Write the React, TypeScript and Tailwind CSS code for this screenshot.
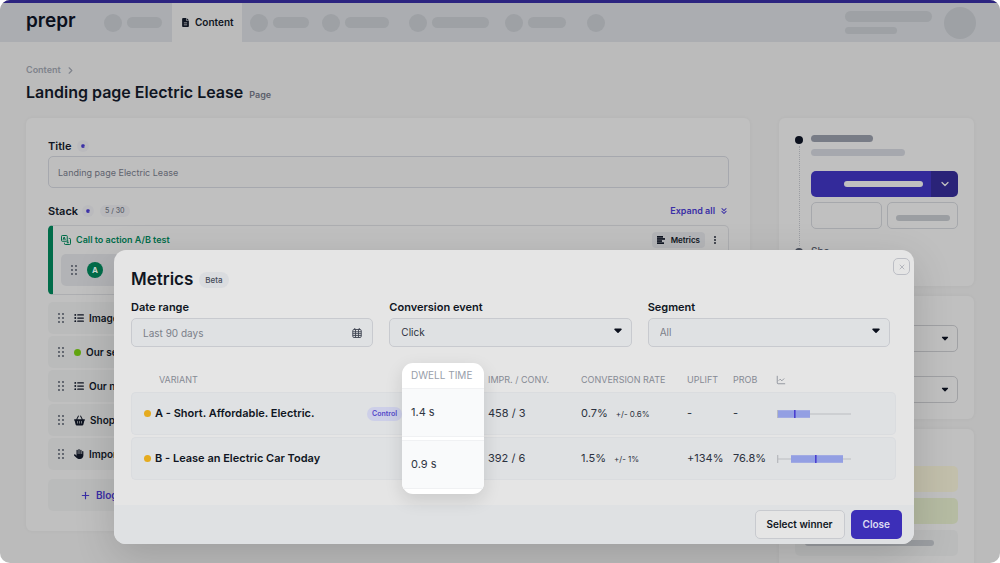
import type { ReactNode } from 'react'
import { ChartLine, ChevronDown, ChevronRight, ChevronsDown, Plus, X } from 'lucide-react'
import { FaBasketShopping, FaCaretDown, FaFileLines, FaHand, FaListUl } from 'react-icons/fa6'

const variants = [
  {
    name: 'A - Short. Affordable. Electric.',
    control: true,
    dwell: '1.4 s',
    impressions: '458 / 3',
    rate: '0.7%',
    margin: '+/- 0.6%',
    uplift: '-',
    prob: '-',
    box: { start: 1, end: 33, median: 18 },
  },
  {
    name: 'B - Lease an Electric Car Today',
    control: false,
    dwell: '0.9 s',
    impressions: '392 / 6',
    rate: '1.5%',
    margin: '+/- 1%',
    uplift: '+134%',
    prob: '76.8%',
    box: { start: 14, end: 66, median: 39 },
  },
]

const stackItems = [
  { label: 'Image', icon: <FaListUl className="size-2.5" /> },
  { label: 'Our se', icon: <span className="size-[7px] rounded-full bg-[#62a510]" /> },
  { label: 'Our n', icon: <FaListUl className="size-2.5" /> },
  { label: 'Shop', icon: <FaBasketShopping className="size-[11px]" /> },
  { label: 'Impor', icon: <FaHand className="size-2.5" /> },
]

function Grip() {
  return (
    <svg viewBox="0 0 6 10" className="h-2.5 w-1.5 shrink-0" fill="#3c424e">
      {[1, 5].map((x) => [1, 5, 9].map((y) => <circle key={`${x}-${y}`} cx={x} cy={y} r="0.9" />))}
    </svg>
  )
}

function AbIcon() {
  return (
    <svg viewBox="0 0 20 20" className="size-2.5 shrink-0" fill="none" stroke="#006c49" strokeWidth="2">
      <rect x="1" y="1" width="11.5" height="11.5" rx="1.5" />
      <path d="M7 15.5V17.5a1.5 1.5 0 0 0 1.5 1.5h9a1.5 1.5 0 0 0 1.5-1.5v-9A1.5 1.5 0 0 0 17.5 7h-2" />
      <path d="M4 9.5 6.3 4l2.4 5.5M4.8 8h3M11.5 15.5h4M13.5 10.5v5" />
    </svg>
  )
}

function BarsIcon() {
  return (
    <svg viewBox="0 0 8 8" className="size-2" fill="#0f1522">
      <rect width="6" height="1.7" />
      <rect y="2.1" width="8" height="1.7" />
      <rect y="4.2" width="5" height="1.7" />
      <rect y="6.3" width="7" height="1.7" />
    </svg>
  )
}

function CalendarIcon() {
  return (
    <svg viewBox="0 0 20 20" className="size-2.5 shrink-0" fill="none" stroke="#3f4552" strokeWidth="1.8">
      <rect x="1.5" y="3" width="17" height="16" rx="2.5" />
      <path d="M1.5 7.5h17M1.5 11.3h17M1.5 15.1h17M7 3V19M13 3V19M5.5 0v4M14.5 0v4" />
    </svg>
  )
}

function DotsIcon() {
  return (
    <svg viewBox="0 0 2 8" className="h-2 w-0.5" fill="#0f1522">
      <circle cx="1" cy="1" r="0.9" />
      <circle cx="1" cy="4" r="0.9" />
      <circle cx="1" cy="7" r="0.9" />
    </svg>
  )
}

function Required() {
  return (
    <span className="flex size-3 items-center justify-center rounded-full bg-[#bababd]">
      <svg viewBox="0 0 6 6" className="size-1" stroke="#3a2fa6" strokeWidth="2">
        <path d="M3 0v6M0.4 1.5l5.2 3M5.6 1.5l-5.2 3" />
      </svg>
    </span>
  )
}

function NavItem({ bar }: { bar?: string }) {
  return (
    <div className="flex items-center gap-[5px]">
      <span className="size-[18px] rounded-full bg-[#9ea1a5]" />
      {bar && <span className={`h-[11px] rounded-full bg-[#9ea1a5] ${bar}`} />}
    </div>
  )
}

function Header() {
  return (
    <header className="flex h-[42px] shrink-0 items-stretch border-t-[3px] border-[#2c2480] bg-[#abadb1]">
      <a href="#" className="w-[78px] pl-[26px] text-[19px] leading-9 font-semibold text-[#0b101d]">
        prepr
      </a>
      <nav className="flex flex-1 items-stretch pl-[26px]">
        <div className="flex w-[68px] items-center">
          <NavItem bar="w-[35px]" />
        </div>
        <a href="#" className="flex w-[70px] items-center gap-[5px] bg-[#bbbbbb] pl-[9px] text-[10px] font-semibold text-[#0f1522]">
          <FaFileLines className="size-[9px]" />
          Content
        </a>
        <div className="flex items-center pl-2">
          <div className="w-[72px]"><NavItem bar="w-[36px]" /></div>
          <div className="w-[87px]"><NavItem bar="w-[44px]" /></div>
          <div className="w-24"><NavItem bar="w-[57px]" /></div>
          <div className="w-[82px]"><NavItem bar="w-[38px]" /></div>
          <NavItem />
        </div>
      </nav>
      <div className="flex items-center gap-3 pr-6">
        <div className="flex flex-col gap-[5px]">
          <span className="h-[11px] w-[87px] rounded-full bg-[#9ea1a5]" />
          <span className="h-[7px] w-[52px] rounded-full bg-[#9ea1a5]" />
        </div>
        <span className="size-8 rounded-full bg-[#9ea1a5]" />
      </div>
    </header>
  )
}

function Editor() {
  return (
    <section className="min-w-0 flex-1 rounded-md bg-[#c0c0c0] pt-5 pr-[21px] pb-5 pl-[22px] shadow-[0_0_4px_rgba(0,0,0,0.04)]">
      <div className="flex h-4 items-center gap-1.5">
        <label htmlFor="title" className="text-[11px] font-semibold">Title</label>
        <Required />
      </div>
      <input
        id="title"
        defaultValue="Landing page Electric Lease"
        className="mt-0.5 block h-8 w-full rounded-[5px] border border-[#a6a8ae] bg-[#bebebe] px-[9px] text-[9px] text-[#5f636e]"
      />

      <div className="mt-[15px] flex h-4 items-center">
        <h2 className="text-[11px] font-semibold">Stack</h2>
        <div className="ml-1"><Required /></div>
        <span className="ml-1.5 rounded-full bg-[#b9b9bc] px-[5px] text-[7px] leading-3 font-medium text-[#5b606b]">5 / 30</span>
        <button className="ml-auto flex items-center gap-1 text-[9px] font-semibold text-[#3a2fa6]">
          Expand all
          <ChevronsDown className="size-2.5" strokeWidth={2.5} />
        </button>
      </div>

      <div className="mt-1.5 h-[70px] rounded-[5px] border border-l-[5px] border-[#adaeb1] border-l-[#006c49] pt-1.5 pr-2 pl-2">
        <div className="flex h-4 items-center gap-[5px] text-[9px] font-semibold text-[#006c49]">
          <AbIcon />
          Call to action A/B test
          <button className="ml-auto flex h-4 items-center gap-1.5 rounded-sm bg-[#b4b5b8] px-[5px] text-[8px] font-semibold text-[#0f1522]">
            <BarsIcon />
            Metrics
          </button>
          <button aria-label="More" className="px-1"><DotsIcon /></button>
        </div>
        <div className="mt-1.5 flex h-8 items-center gap-2.5 rounded-[5px] bg-[#b2b3b6] pl-2.5">
          <Grip />
          <span className="flex size-4 items-center justify-center rounded-full bg-[#006c49] text-[8px] font-bold text-[#c9d6d1]">A</span>
        </div>
      </div>

      <ul className="mt-[7px] flex flex-col gap-0.5">
        {stackItems.map((item) => (
          <li key={item.label} className="flex h-8 items-center gap-2.5 rounded-[5px] bg-[#babbbb] pl-2.5 text-[10px] font-semibold">
            <Grip />
            <span className="flex items-center gap-[5px]">
              {item.icon}
              {item.label}
            </span>
          </li>
        ))}
      </ul>
      <button className="mt-[9px] flex h-8 w-full items-center gap-[5px] rounded-[5px] bg-[#babbbb] pl-8 text-[10px] font-semibold text-[#3a2fa6]">
        <Plus className="size-[11px]" strokeWidth={2.5} />
        Blog
      </button>
    </section>
  )
}

function SideSelect({ label }: { label: string }) {
  return (
    <div className="relative">
      <select aria-label={label} className="block h-[27px] w-full appearance-none rounded-[5px] border border-[#a0a1a4] bg-transparent" />
      <FaCaretDown className="pointer-events-none absolute top-2 right-2 size-2.5 text-[#0b101d]" />
    </div>
  )
}

function Sidebar() {
  return (
    <aside className="flex w-[195px] shrink-0 flex-col gap-2.5">
      <div className="flex h-[168px] gap-2 overflow-hidden rounded-md bg-[#c0c0c0] pt-[17px] pr-4 pl-4 shadow-[0_0_4px_rgba(0,0,0,0.04)]">
        <div className="flex w-2 flex-col items-center">
          <span className="mt-px size-2 shrink-0 rounded-full bg-[#0b101d]" />
          <span className="my-0.5 h-[100px] border-l border-dotted border-[#9b9da2]" />
          <span className="size-2 shrink-0 rounded-full bg-[#4a4f5b]" />
        </div>
        <div className="flex-1">
          <div className="h-[7px] w-[62px] rounded-full bg-[#787c86]" />
          <div className="mt-[7px] h-[7px] w-[94px] rounded-full bg-[#a6a8ae]" />
          <div className="mt-[15px] flex h-[26px] overflow-hidden rounded-[5px]">
            <button aria-label="Publish" className="flex flex-1 items-center justify-end bg-[#332a9a] pr-2">
              <span className="h-1.5 w-[79px] rounded-full bg-[#c0c0c0]" />
            </button>
            <button aria-label="Publish options" className="flex w-[27px] items-center justify-center bg-[#2a2378] text-[#c0c0c0]">
              <ChevronDown className="size-3" strokeWidth={2.5} />
            </button>
          </div>
          <div className="mt-[5px] grid grid-cols-2 gap-[5px]">
            <button aria-label="Preview" className="h-[27px] rounded-[5px] border border-[#a6a8ac]" />
            <button aria-label="Save" className="flex h-[27px] items-center justify-center rounded-[5px] border border-[#a6a8ac] pt-1">
              <span className="h-1.5 w-[54px] rounded-full bg-[#9b9ea2]" />
            </button>
          </div>
          <p className="mt-[15px] text-[10px] font-medium text-[#4a4f5b]">Sho</p>
        </div>
      </div>
      <div className="flex h-[123px] flex-col gap-6 rounded-md bg-[#c0c0c0] px-4 pt-[29px] shadow-[0_0_4px_rgba(0,0,0,0.04)]">
        <SideSelect label="Status" />
        <SideSelect label="Locale" />
      </div>
      <div className="flex h-44 flex-col gap-1.5 rounded-md bg-[#c0c0c0] px-4 pt-[37px] shadow-[0_0_4px_rgba(0,0,0,0.04)]">
        <div className="h-[26px] rounded-[5px] bg-[#c2bfab]" />
        <div className="h-[26px] rounded-[5px] bg-[#b5bba2]" />
        <div className="flex h-[26px] items-center rounded-[5px] bg-[#babbbb] pl-2.5">
          <span className="h-1.5 w-[129px] rounded-full bg-[#9b9ea2]" />
        </div>
      </div>
    </aside>
  )
}

function Field({ id, label, children }: { id: string; label: string; children: ReactNode }) {
  return (
    <div>
      <label htmlFor={id} className="block text-[11px] leading-4 font-semibold">{label}</label>
      <div className="relative mt-[3px]">{children}</div>
    </div>
  )
}

function BoxPlot({ start, end, median }: { start: number; end: number; median: number }) {
  return (
    <svg viewBox="0 0 74 8" className="h-2 w-[74px]">
      <rect y="3.5" width="74" height="1" fill="#bcbec1" />
      <rect width="1.3" height="8" fill="#b9bbbf" />
      <rect x={start} y="0.2" width={end - start} height="7.6" fill="#939fe3" />
      <rect x={median - 1} y="0" width="1.6" height="8" fill="#4a3fd0" />
    </svg>
  )
}

function DwellHighlight() {
  return (
    <div className="absolute inset-x-0 -top-1.5 h-[131px] overflow-hidden rounded-[11px] bg-white font-normal text-[#2f3542] shadow-[0_6px_18px_rgba(0,0,0,0.12)]">
      <div className="flex h-[25px] items-center pl-[9px] text-[10px] text-[#989eaa]">DWELL TIME</div>
      <div className="flex flex-col gap-[3px]">
        {variants.map((variant) => (
          <div key={variant.name} className="flex h-[49px] items-center border-y border-[#f0f1f3] bg-[#f9fafb] pl-[9px] text-[11px]">
            {variant.dwell}
          </div>
        ))}
      </div>
    </div>
  )
}

function VariantTable() {
  return (
    <table className="w-full table-fixed border-separate border-spacing-x-0 border-spacing-y-0.5 text-left text-[11px] text-[#2c3240]">
      <thead>
        <tr className="h-[21px] text-[9px] text-[#868a94]">
          <th className="pl-7 font-normal">VARIANT</th>
          <th className="relative w-[82px] p-0">
            <DwellHighlight />
          </th>
          <th className="w-[93px] pl-1 font-normal">IMPR. / CONV.</th>
          <th className="w-[106px] pl-1 font-normal">CONVERSION RATE</th>
          <th className="w-[46px] pl-1 font-normal">UPLIFT</th>
          <th className="w-[43px] pl-1 font-normal">PROB</th>
          <th className="w-[124px] pl-1 font-normal" aria-label="Chart">
            <ChartLine className="size-2.5" />
          </th>
        </tr>
      </thead>
      <tbody>
        {variants.map((variant) => (
          <tr key={variant.name} className="h-[43px] bg-[#dfe1e3]">
            <td className="rounded-l-[5px] border border-r-0 border-[#dadcdf] pl-3">
              <div className="flex items-center gap-1">
                <span className="size-[7px] rounded-full bg-[#e5ab1f]" />
                <span className="font-semibold text-[#0f1522]">{variant.name}</span>
                {variant.control && (
                  <span className="ml-auto rounded-full bg-[#cdcfe8] px-[5px] text-[7px] leading-[14px] font-semibold text-[#5347c9]">Control</span>
                )}
              </div>
            </td>
            <td className="border-y border-[#dadcdf]" />
            <td className="border-y border-[#dadcdf] pl-1">{variant.impressions}</td>
            <td className="border-y border-[#dadcdf] pl-1">
              {variant.rate}
              <span className="ml-2 text-[8px]">{variant.margin}</span>
            </td>
            <td className="border-y border-[#dadcdf] pl-1">{variant.uplift}</td>
            <td className="border-y border-[#dadcdf] pl-1">{variant.prob}</td>
            <td className="rounded-r-[5px] border border-l-0 border-[#dadcdf] pl-[5px]">
              <BoxPlot {...variant.box} />
            </td>
          </tr>
        ))}
      </tbody>
    </table>
  )
}

const fieldClass = 'block h-[29px] w-full appearance-none rounded-[5px] border border-[#c8cacf] bg-[#dfe1e3] px-[11px]'

function MetricsDialog() {
  return (
    <div
      role="dialog"
      aria-labelledby="metrics-title"
      className="absolute top-[250px] right-[86px] left-[114px] overflow-hidden rounded-xl bg-[#e5e5e5] shadow-[0_12px_40px_rgba(0,0,0,0.16)]"
    >
      <div className="flex items-start pt-2 pr-1 pl-[17px]">
        <div className="flex h-[43px] flex-1 items-center gap-1.5">
          <h2 id="metrics-title" className="text-[17px] font-semibold">Metrics</h2>
          <span className="rounded-full bg-[#dadcdf] px-1.5 text-[8px] leading-4 font-medium text-[#454b58]">Beta</span>
        </div>
        <button aria-label="Close dialog" className="flex size-[17px] items-center justify-center rounded-[5px] border border-[#bcbec5] text-[#b4b6bd]">
          <X className="size-2" strokeWidth={3} />
        </button>
      </div>

      <div className="-mt-0.5 grid grid-cols-3 gap-4 pr-6 pl-[17px]">
        <Field id="range" label="Date range">
          <input id="range" readOnly value="Last 90 days" className={`${fieldClass} text-[10px] text-[#7b7f89]`} />
          <span className="pointer-events-none absolute inset-y-0 right-[11px] flex items-center">
            <CalendarIcon />
          </span>
        </Field>
        <Field id="event" label="Conversion event">
          <select id="event" className={`${fieldClass} text-[10px] text-[#2c3240]`}>
            <option>Click</option>
          </select>
          <FaCaretDown className="pointer-events-none absolute top-1.5 right-2 size-3 text-[#0b101d]" />
        </Field>
        <Field id="segment" label="Segment">
          <select id="segment" className={`${fieldClass} text-[10px] text-[#7b7f89]`}>
            <option>All</option>
          </select>
          <FaCaretDown className="pointer-events-none absolute top-1.5 right-2 size-3 text-[#0b101d]" />
        </Field>
      </div>

      <div className="pt-5 pr-[18px] pb-[23px] pl-[17px]">
        <VariantTable />
      </div>

      <div className="flex h-[39px] items-center justify-end gap-1.5 bg-[#dfe1e3] pr-3">
        <button className="h-[29px] rounded-[5px] border border-[#c8cacf] bg-[#e5e5e5] px-[11px] text-[10px] font-semibold">Select winner</button>
        <button className="h-[29px] rounded-[5px] bg-[#3c2fb8] px-3 text-[10px] font-semibold text-[#dddbf2]">Close</button>
      </div>
    </div>
  )
}

export default function App() {
  return (
    <div className="bg-white font-['Inter',sans-serif] text-[#0f1522]">
      <div className="relative flex h-screen flex-col overflow-hidden rounded-[10px] bg-[#bbbbbb]">
        <Header />
        <main className="px-[26px] pt-5">
          <nav className="flex h-4 items-center gap-1 text-[9px] font-semibold text-[#7f838c]">
            <a href="#">Content</a>
            <ChevronRight className="size-[11px]" strokeWidth={2.5} />
          </nav>
          <div className="mt-0.5 flex h-6 items-baseline gap-1.5">
            <h1 className="text-base font-semibold">Landing page Electric Lease</h1>
            <span className="text-[9px] font-semibold text-[#5b606b]">Page</span>
          </div>
          <div className="mt-3.5 flex items-start gap-[29px]">
            <Editor />
            <Sidebar />
          </div>
        </main>
        <MetricsDialog />
      </div>
    </div>
  )
}
